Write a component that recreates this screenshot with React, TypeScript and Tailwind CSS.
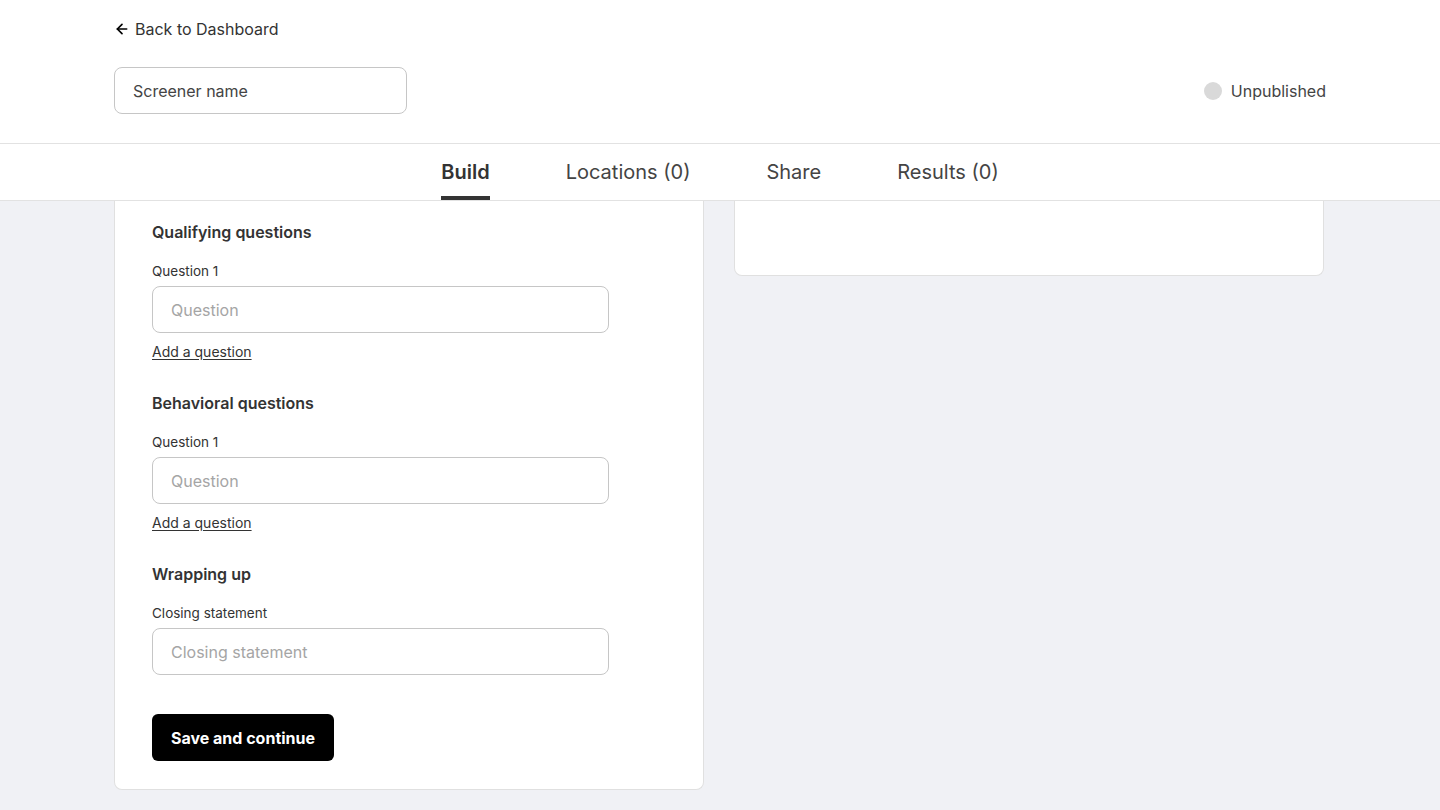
import { ArrowLeft } from "lucide-react";

const tabs = [
  { label: "Build", active: true },
  { label: "Locations (0)", active: false },
  { label: "Share", active: false },
  { label: "Results (0)", active: false },
];

function QuestionSection({
  title,
  label,
  placeholder,
  addLink,
  first,
}: {
  title: string;
  label: string;
  placeholder: string;
  addLink?: boolean;
  first?: boolean;
}) {
  return (
    <section className={first ? "" : "mt-[31px]"}>
      <h2 className="text-[16px] leading-[22px] font-semibold text-[#333]">{title}</h2>
      <label className="block mt-[19px] text-[13.5px] leading-[18px] text-[#333]">{label}</label>
      <input
        type="text"
        placeholder={placeholder}
        className="mt-[6px] w-[457px] h-[47px] px-[18px] border border-[#c6c6c6] rounded-lg text-[16px] text-[#333] placeholder:text-[#a5a5a5] focus:outline-none"
      />
      {addLink && (
        <a href="#" className="block mt-[10px] text-[14px] leading-[18px] text-[#333] underline underline-offset-2 w-fit">
          Add a question
        </a>
      )}
    </section>
  );
}

export default function App() {
  return (
    <div className="h-screen flex flex-col bg-[#f0f1f5] font-['Inter',sans-serif] overflow-hidden">
      <header className="bg-white border-b border-[#e2e2e2]">
        <div className="mx-auto w-[1212px] pt-[18px] pb-[29px]">
          <a href="#" className="flex items-center gap-[5px] h-[21px] text-[16px] text-[#333] w-fit">
            <ArrowLeft size={16} strokeWidth={2.5} className="text-black" />
            Back to Dashboard
          </a>
          <div className="mt-[28px] flex items-center justify-between">
            <input
              type="text"
              placeholder="Screener name"
              className="w-[293px] h-[47px] px-[18px] border border-[#c6c6c6] rounded-lg text-[16px] text-[#333] placeholder:text-[#444] focus:outline-none"
            />
            <div className="flex items-center gap-[9px] text-[16px] text-[#444]">
              <span className="w-[18px] h-[18px] rounded-full bg-[#d9d9d9]" />
              Unpublished
            </div>
          </div>
        </div>
      </header>

      <nav className="bg-white border-b border-[#e2e2e2]">
        <div className="flex justify-center gap-[76px] h-[56px]">
          {tabs.map((t) => (
            <button
              key={t.label}
              className={`h-full flex items-center pt-[4px] border-b-4 text-[20px] ${
                t.active ? "border-[#333] font-semibold text-[#333]" : "border-transparent text-[#444]"
              }`}
            >
              {t.label}
            </button>
          ))}
        </div>
      </nav>

      <main className="flex-1">
        <div className="mx-auto w-[1212px] flex items-start gap-[30px]">
          <div className="w-[590px] bg-white border border-t-0 border-[#e0e0e0] rounded-b-lg pl-[37px] pt-[20px] pb-[28px]">
            <QuestionSection first title="Qualifying questions" label="Question 1" placeholder="Question" addLink />
            <QuestionSection title="Behavioral questions" label="Question 1" placeholder="Question" addLink />
            <QuestionSection title="Wrapping up" label="Closing statement" placeholder="Closing statement" />
            <button className="mt-[39px] w-[182px] h-[47px] bg-black text-white rounded-md text-[16px] font-bold">
              Save and continue
            </button>
          </div>
          <div className="w-[590px] h-[75px] bg-white border border-t-0 border-[#e0e0e0] rounded-b-lg" />
        </div>
      </main>
    </div>
  );
}
